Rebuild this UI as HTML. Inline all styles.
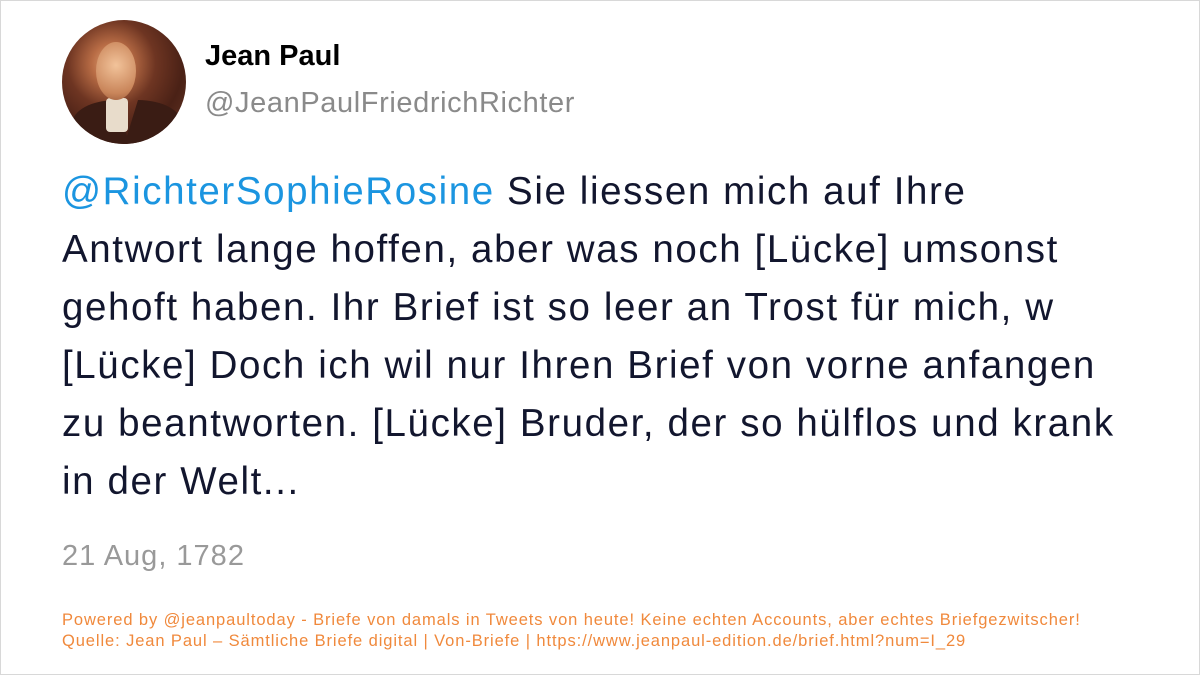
<!DOCTYPE html>
<html><head><meta charset="utf-8"><style>
html,body{margin:0;padding:0;}
body{width:1200px;height:675px;background:#fff;position:relative;overflow:hidden;font-family:"Liberation Sans",sans-serif;}
.frame{position:absolute;left:0;top:0;width:1198px;height:673px;border:1px solid #d8d8d8;}
.av{position:absolute;left:62px;top:20px;width:124px;height:124px;border-radius:50%;background:radial-gradient(circle at 40% 35%,#e6a77a 0,#b86c45 18%,#6e3522 40%,#4a2116 65%,#6b3a28 100%);overflow:hidden;}
.av .face{position:absolute;left:34px;top:22px;width:40px;height:58px;border-radius:50%;background:radial-gradient(circle at 50% 40%,#f2c39a,#c9855a 70%,#9a5a3a);}
.av .shirt{position:absolute;left:44px;top:78px;width:22px;height:34px;background:#e8dccb;border-radius:4px;}
.av .coat{position:absolute;left:10px;top:80px;width:110px;height:60px;background:#3a1c14;border-radius:40% 40% 0 0;clip-path:polygon(0 0,40% 0,50% 60%,60% 0,100% 0,100% 100%,0 100%);}
.name{position:absolute;left:205px;top:40px;font-size:29px;font-weight:bold;color:#000;}
.handle{position:absolute;left:205px;top:87px;font-size:29px;letter-spacing:0.6px;color:#8a8a8a;}
.text{position:absolute;left:62px;top:163px;font-size:38.5px;letter-spacing:1.6px;line-height:58px;color:#12162e;white-space:nowrap;}
.text a{color:#1b95e0;text-decoration:none;}
.date{position:absolute;left:62px;top:540px;font-size:29px;letter-spacing:1px;color:#999;}
.foot{position:absolute;left:62px;top:610px;font-size:16.5px;letter-spacing:0.9px;line-height:21px;color:#f0893c;white-space:nowrap;}
</style></head><body>
<div class="frame"></div>
<div class="av"><div class="coat"></div><div class="shirt"></div><div class="face"></div></div>
<div class="name">Jean Paul</div>
<div class="handle">@JeanPaulFriedrichRichter</div>
<div class="text"><a>@RichterSophieRosine</a> Sie liessen mich auf Ihre<br>Antwort lange hoffen, aber was noch [Lücke] umsonst<br>gehoft haben. Ihr Brief ist so leer an Trost für mich, w<br>[Lücke] Doch ich wil nur Ihren Brief von vorne anfangen<br>zu beantworten. [Lücke] Bruder, der so hülflos und krank<br>in der Welt...</div>
<div class="date">21 Aug, 1782</div>
<div class="foot">Powered by @jeanpaultoday - Briefe von damals in Tweets von heute! Keine echten Accounts, aber echtes Briefgezwitscher!<br>Quelle: Jean Paul – Sämtliche Briefe digital | Von-Briefe | https://www.jeanpaul-edition.de/brief.html?num=I_29</div>
</body></html>
